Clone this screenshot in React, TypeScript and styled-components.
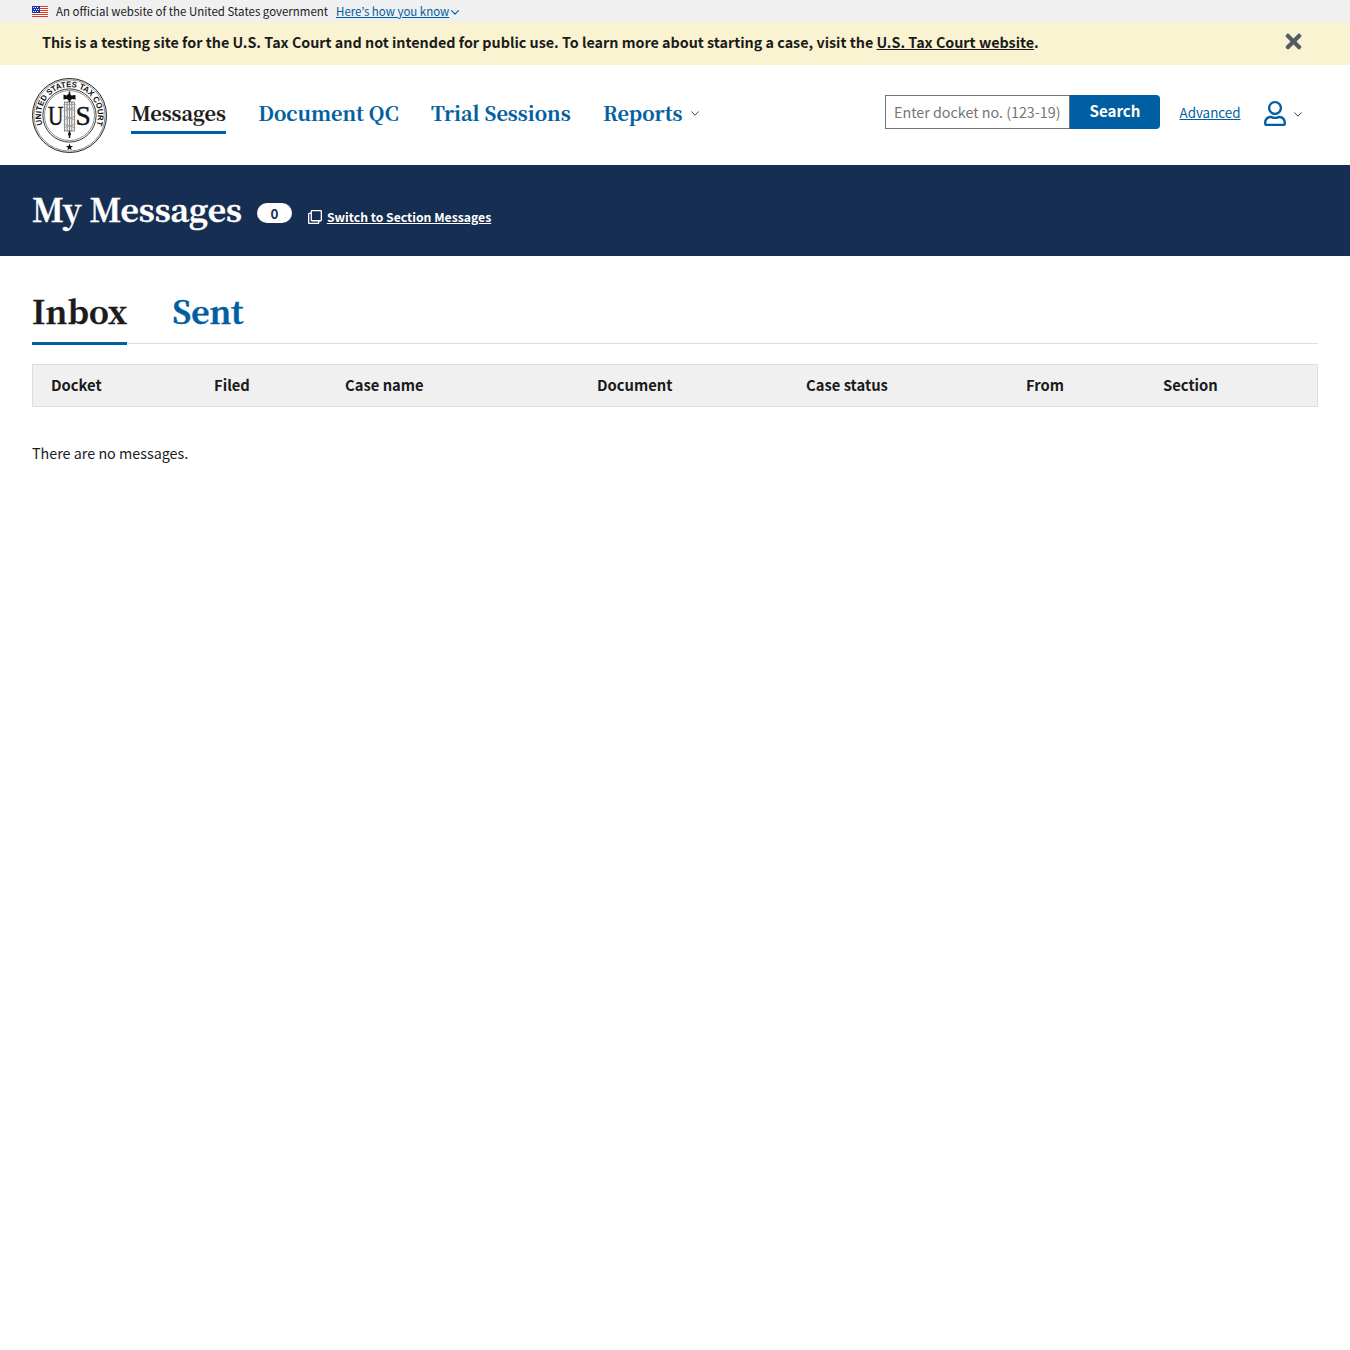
import React from "react";
import styled, { createGlobalStyle, css } from "styled-components";
import { FaRegClone, FaRegUser, FaTimes } from "react-icons/fa";

const sans = `"Noto Sans CJK KR", "Noto Sans", sans-serif`;
const serif = `"Noto Serif CJK SC", "Liberation Serif", serif`;

const color = {
  ink: "#1b1b1b",
  blue: "#005ea2",
  navy: "#162e51",
  pale: "#f0f0f0",
  line: "#dcdee0",
  warning: "#faf3d1",
};

const GlobalStyle = createGlobalStyle`
  *, *::before, *::after { box-sizing: border-box; }
  body {
    margin: 0;
    background: #fff;
    color: ${color.ink};
    font-family: ${sans};
    -webkit-font-smoothing: antialiased;
  }
`;

const GovBanner = styled.div`
  display: flex;
  align-items: center;
  height: 22px;
  padding: 0 32px;
  background: ${color.pale};
  font-size: 11.47px;
  line-height: 22px;
`;

const Flag = styled.svg`
  width: 16px;
  height: 11px;
  margin-right: 8px;
`;

const BannerLink = styled.a`
  margin-left: 8px;
  color: ${color.blue};
  text-decoration: underline;
  text-underline-offset: 1px;
`;

const Chevron = styled.svg<{ $tone?: string; $weight?: number }>`
  flex: none;
  width: 8px;
  height: 5px;
  fill: none;
  stroke: ${(p) => p.$tone ?? "#3d4551"};
  stroke-width: ${(p) => p.$weight ?? 1};
  stroke-linecap: round;
  stroke-linejoin: round;
`;

const BannerChevron = styled(Chevron)`
  margin: 2px 0 0 2px;
`;

const Warning = styled.div`
  display: flex;
  justify-content: space-between;
  height: 43px;
  padding: 10px 45px 0 42px;
  background: ${color.warning};
  font-size: 14.32px;
  font-weight: 700;
  line-height: 20px;
`;

const WarningLink = styled.a`
  color: inherit;
  text-decoration: underline;
  text-underline-offset: 1px;
`;

const CloseButton = styled.button`
  display: flex;
  align-items: center;
  height: 19px;
  padding: 0;
  border: 0;
  background: none;
  color: #565c65;
  font-size: 23px;
`;

const Header = styled.header`
  display: flex;
  align-items: flex-start;
  height: 100px;
  padding: 12px 48px 0 31px;
`;

const Seal = styled.svg`
  flex: none;
  width: 77px;
  height: 77px;
  margin-right: 23px;
`;

const Nav = styled.nav`
  display: flex;
  gap: 32.3px;
  padding-top: 23px;
`;

const NavItem = styled.a<{ $active?: boolean }>`
  display: flex;
  align-items: center;
  height: 34px;
  padding-bottom: 6px;
  border-bottom: 3px solid ${(p) => (p.$active ? color.blue : "transparent")};
  color: ${(p) => (p.$active ? color.ink : color.blue)};
  font-family: ${serif};
  font-size: 19.9px;
  font-weight: 700;
  line-height: 25px;
  -webkit-text-stroke: 0.2px currentColor;

  svg {
    margin: 1px 0 0 8px;
  }
`;

const Tools = styled.div`
  display: flex;
  align-items: center;
  height: 34px;
  margin: 18px 0 0 auto;
`;

const SearchInput = styled.input`
  width: 185px;
  height: 34px;
  margin: 0;
  padding: 0 0 2px 8px;
  border: 1px solid #71767a;
  border-radius: 0;
  font: 400 14.3px ${sans};

  &::placeholder {
    color: #757575;
    opacity: 1;
  }
`;

const SearchButton = styled.button`
  width: 90px;
  height: 34px;
  padding: 0 0 4px;
  border: 0;
  border-radius: 0 4px 4px 0;
  background: ${color.blue};
  color: #fff;
  font: 700 15.1px ${sans};
`;

const AdvancedLink = styled.a`
  margin: 0 23.5px 0 19.5px;
  color: ${color.blue};
  font-size: 13.38px;
  line-height: 20px;
  text-decoration: underline;
  text-underline-offset: 1px;
`;

const AccountMenu = styled.button`
  display: flex;
  align-items: center;
  gap: 8px;
  padding: 3px 0 0;
  border: 0;
  background: none;
  color: ${color.blue};

  svg:first-child {
    width: 22px;
    height: 25px;
  }

  svg:last-child {
    margin-top: 1px;
  }
`;

const TitleBar = styled.section`
  display: flex;
  align-items: flex-start;
  height: 91px;
  padding: 0 32px;
  background: ${color.navy};
  color: #fff;
`;

const Title = styled.h1`
  margin: 23px 15px 0 0;
  font-family: ${serif};
  font-size: 31.95px;
  font-weight: 700;
  line-height: 40px;
  -webkit-text-stroke: 0.5px currentColor;
`;

const Count = styled.span`
  width: 35px;
  height: 20px;
  margin: 38px 16px 0 0;
  border-radius: 10px;
  background: #fff;
  color: ${color.navy};
  font-size: 13.4px;
  font-weight: 700;
  line-height: 20px;
  text-align: center;
`;

const SwitchLink = styled.a`
  display: flex;
  align-items: center;
  gap: 5px;
  margin-top: 42px;
  font-size: 12.22px;
  font-weight: 700;
  line-height: 20px;

  span {
    text-decoration: underline;
    text-underline-offset: 1px;
  }

  svg {
    width: 14px;
    height: 14px;
  }
`;

const Main = styled.main`
  padding: 34px 32px 0;
`;

const Tabs = styled.div`
  display: flex;
  gap: 45px;
  height: 54px;
  margin-bottom: 20px;
  border-bottom: 1px solid ${color.line};
`;

const Tab = styled.button<{ $active?: boolean }>`
  height: 55px;
  padding: 0 0 11px;
  border: 0;
  border-bottom: 3px solid transparent;
  background: none;
  color: ${color.blue};
  font: 700 31.85px/41px ${serif};
  -webkit-text-stroke: 0.5px currentColor;
  ${(p) =>
    p.$active &&
    css`
      border-bottom-color: ${color.blue};
      color: ${color.ink};
    `}
`;

const TableHead = styled.div`
  display: grid;
  grid-template-columns: 163px 131px 252px 209px 220px 137px 1fr;
  height: 43px;
  padding-left: 18px;
  border: 1px solid ${color.line};
  background: ${color.pale};
  font-size: 14.77px;
  font-weight: 700;
  line-height: 40px;
`;

const Empty = styled.p`
  margin: 36px 0 0;
  font-size: 14.33px;
  line-height: 20px;
`;

const columns = ["Docket", "Filed", "Case name", "Document", "Case status", "From", "Section"];

const chevronPath = <path d="M.6.7 4 4.2 7.4.7" />;

function FlagIcon() {
  return (
    <Flag viewBox="0 0 16 11" shapeRendering="crispEdges">
      <rect width="16" height="11" fill="#fff" />
      {[0, 2, 4, 6, 8, 10].map((y) => (
        <rect key={y} y={y} width="16" height="1" fill="#db3e1f" />
      ))}
      <rect width="8" height="7" fill="#1e33b1" />
      {[1, 3, 5].map((y) =>
        [1, 3, 5].map((x) => (
          <rect key={`${x}-${y}`} x={x + (y === 3 ? 1 : 0)} y={y} width="1" height="1" fill="#fff" />
        ))
      )}
    </Flag>
  );
}

function CourtSeal() {
  return (
    <Seal viewBox="0 0 77 77" fill="none" stroke="#222">
      <defs>
        <path id="legend" d="M11.6 47.6A28.4 28.4 0 1 1 65.4 47.6" />
      </defs>
      <circle cx="38.5" cy="38.5" r="37" strokeWidth="1" />
      <circle cx="38.5" cy="38.5" r="35.6" strokeWidth=".5" />
      <circle cx="38.5" cy="38.5" r="26.6" strokeWidth=".9" />
      <circle cx="38.5" cy="38.5" r="25" strokeWidth=".5" />
      <text
        fill="#111"
        stroke="none"
        fontFamily="Liberation Sans, sans-serif"
        fontWeight="700"
        fontSize="8.2"
      >
        <textPath href="#legend" startOffset="0" textLength="108" lengthAdjust="spacingAndGlyphs">
          UNITED STATES TAX COURT
        </textPath>
      </text>
      <g fill="#111" strokeWidth=".5" fontFamily="Liberation Serif, serif" fontSize="28">
        <text transform="translate(17 48) scale(.76 1)">U</text>
        <text transform="translate(44.4 48) scale(.98 1)">S</text>
      </g>
      <path d="M38.5 14.5v11M38.5 54v7" strokeWidth="1.6" />
      <path d="M32.5 17.500l3 1 2.500-2 2.500 2 4-.5v4.500l-3.500-.5-2.500 2-2.500-2-3.500.5z" fill="#111" stroke="none" />
      <rect x="33.700" y="25" width="9.600" height="29" fill="#eee" strokeWidth=".5" />
      <path d="M36.200 25v29M38.500 25v29M40.800 25v29" stroke="#444" strokeWidth=".6" />
      <path
        d="M32.500 27.500h12M32.500 30l12 4M44.500 30l-12 4M32.500 39l12 4M44.500 39l-12 4M32.500 47l12 4M44.500 47l-12 4"
        stroke="#999"
        strokeWidth=".9"
      />
      <circle cx="38.500" cy="57" r="1.500" fill="#111" stroke="none" />
      <path
        d="m38.500 66.600.9 2.500h2.600l-2.100 1.600.8 2.600-2.200-1.500-2.200 1.500.8-2.600-2.100-1.600h2.600z"
        fill="#111"
        stroke="none"
      />
    </Seal>
  );
}

export default function App() {
  return (
    <>
      <GlobalStyle />
      <GovBanner>
        <FlagIcon />
        <span>An official website of the United States government</span>
        <BannerLink>Here’s how you know</BannerLink>
        <BannerChevron viewBox="0 0 8 5" $tone={color.blue} $weight={1.2}>
          {chevronPath}
        </BannerChevron>
      </GovBanner>

      <Warning>
        <span>
          This is a testing site for the U.S. Tax Court and not intended for public use. To learn more
          about starting a case, visit the <WarningLink>U.S. Tax Court website</WarningLink>.
        </span>
        <CloseButton aria-label="Close">
          <FaTimes />
        </CloseButton>
      </Warning>

      <Header>
        <CourtSeal />
        <Nav>
          <NavItem $active>Messages</NavItem>
          <NavItem>Document QC</NavItem>
          <NavItem>Trial Sessions</NavItem>
          <NavItem>
            Reports
            <Chevron viewBox="0 0 8 5">{chevronPath}</Chevron>
          </NavItem>
        </Nav>
        <Tools>
          <SearchInput placeholder="Enter docket no. (123-19)" />
          <SearchButton>Search</SearchButton>
          <AdvancedLink>Advanced</AdvancedLink>
          <AccountMenu aria-label="Account">
            <FaRegUser />
            <Chevron viewBox="0 0 8 5">{chevronPath}</Chevron>
          </AccountMenu>
        </Tools>
      </Header>

      <TitleBar>
        <Title>My Messages</Title>
        <Count>0</Count>
        <SwitchLink>
          <FaRegClone />
          <span>Switch to Section Messages</span>
        </SwitchLink>
      </TitleBar>

      <Main>
        <Tabs>
          <Tab $active>Inbox</Tab>
          <Tab>Sent</Tab>
        </Tabs>
        <TableHead>
          {columns.map((name) => (
            <span key={name}>{name}</span>
          ))}
        </TableHead>
        <Empty>There are no messages.</Empty>
      </Main>
    </>
  );
}
